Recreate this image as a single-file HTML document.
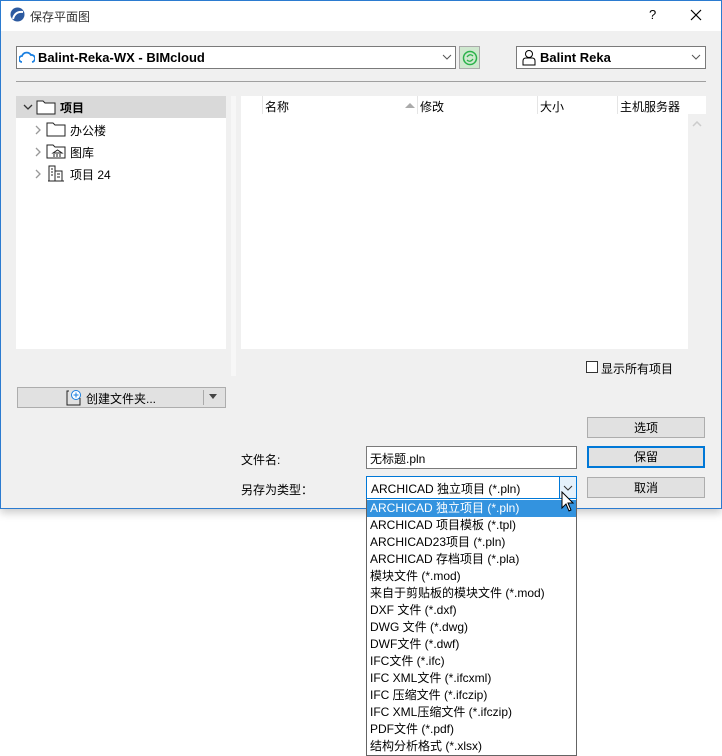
<!DOCTYPE html>
<html><head><meta charset="utf-8"><style>
*{margin:0;padding:0;box-sizing:border-box}
body{width:722px;height:756px;background:#fff;font-family:"Liberation Sans","Noto Sans CJK SC",sans-serif;font-size:12px;color:#000;position:relative;overflow:hidden}
.a{position:absolute}
.win{left:0;top:0;width:722px;height:509px;background:#f0f0f0;box-shadow:0 4px 8px rgba(0,0,0,.2)}
.bd{left:0;top:0;width:722px;height:509px;border:1px solid #2b7bd0;pointer-events:none}
.tb{left:0;top:0;width:722px;height:31px;background:#fff}
.combo{background:#fff;border:1px solid #7a7a7a}
.btn{background:#e1e1e1;border:1px solid #adadad;text-align:center;line-height:20px}
.it{position:absolute;left:3px;height:17px;line-height:17px;white-space:nowrap}
</style></head><body>
<div class="a win">
<div class="a tb"></div>
<svg class="a" style="left:10px;top:7px" width="15" height="15"><circle cx="7.5" cy="7.5" r="7" fill="#2c5aa0"/><path d="M3 12 Q5 4 13 5" stroke="#fff" stroke-width="2" fill="none"/></svg>
<div class="a" style="left:30px;top:8px;color:#333">保存平面图</div>
<div class="a" style="left:649px;top:7px;font-size:13px">?</div>
<svg class="a" style="left:690px;top:9px" width="12" height="12"><path d="M1 1L11 11M11 1L1 11" stroke="#000" stroke-width="1.2"/></svg>

<div class="a combo" style="left:16px;top:46px;width:440px;height:23px"></div>
<svg class="a" style="left:19px;top:51px" width="16" height="12"><path d="M3 11 A3 3 0 0 1 3 5 A5 5 0 0 1 12 4 A3.5 3.5 0 0 1 13 11" stroke="#1a7fe0" stroke-width="1.8" fill="none"/></svg>
<div class="a" style="left:38px;top:50px;font-weight:bold;font-size:13px">Balint-Reka-WX - BIMcloud</div>
<svg class="a" style="left:442px;top:54px" width="10" height="6"><path d="M1 1L5 5L9 1" stroke="#555" fill="none"/></svg>
<div class="a" style="left:459px;top:46px;width:21px;height:23px;background:#cfe8cf;border:1px solid #aaa"></div>
<svg class="a" style="left:462px;top:50px" width="16" height="16"><circle cx="8" cy="8" r="6.5" stroke="#2ab24a" stroke-width="1.5" fill="none"/><path d="M5 7 Q8 3 11 6M11 9 Q8 13 5 10" stroke="#2ab24a" stroke-width="1.3" fill="none"/></svg>
<div class="a combo" style="left:516px;top:46px;width:190px;height:23px"></div>
<svg class="a" style="left:522px;top:49px" width="14" height="17"><circle cx="7" cy="5" r="3.5" stroke="#000" fill="none"/><path d="M1 16V12Q1 9 4 9H10Q13 9 13 12V16Z" stroke="#000" fill="none"/></svg>
<div class="a" style="left:540px;top:50px;font-weight:bold;font-size:13px">Balint Reka</div>
<svg class="a" style="left:691px;top:54px" width="10" height="6"><path d="M1 1L5 5L9 1" stroke="#555" fill="none"/></svg>
<div class="a" style="left:16px;top:81px;width:690px;height:1px;background:#a0a0a0"></div>

<div class="a" style="left:16px;top:96px;width:210px;height:253px;background:#fff"></div>
<div class="a" style="left:16px;top:96px;width:210px;height:22px;background:#d9d9d9"></div>
<svg class="a" style="left:23px;top:104px" width="10" height="6"><path d="M1 1L5 5L9 1" stroke="#333" stroke-width="1.3" fill="none"/></svg>
<svg class="a" style="left:36px;top:98px" width="20" height="17"><path d="M1 3H7L9 5H19V16H1Z" stroke="#222" fill="#fff"/></svg>
<div class="a" style="left:60px;top:99px;font-weight:bold">项目</div>
<svg class="a" style="left:35px;top:125px" width="6" height="10"><path d="M1 1L5 5L1 9" stroke="#999" stroke-width="1.3" fill="none"/></svg>
<svg class="a" style="left:46px;top:120px" width="20" height="17"><path d="M1 3H7L9 5H19V16H1Z" stroke="#222" fill="#fff"/></svg>
<div class="a" style="left:70px;top:122px">办公楼</div>
<svg class="a" style="left:35px;top:147px" width="6" height="10"><path d="M1 1L5 5L1 9" stroke="#999" stroke-width="1.3" fill="none"/></svg>
<svg class="a" style="left:46px;top:142px" width="20" height="18"><path d="M1 3H7L9 5H19V16H1Z" stroke="#222" fill="#fff"/><path d="M7 11L11.5 8L16 11ZM8 12V15M11 12V15M14 12V15M6 16H17" stroke="#222" fill="none"/></svg>
<div class="a" style="left:70px;top:144px">图库</div>
<svg class="a" style="left:35px;top:169px" width="6" height="10"><path d="M1 1L5 5L1 9" stroke="#999" stroke-width="1.3" fill="none"/></svg>
<svg class="a" style="left:47px;top:164px" width="18" height="18"><path d="M2 17V2H8V17M8 7H15V17M1 17H17M4 5H6M4 8H6M4 11H6M10 10H13M10 13H13" stroke="#222" fill="none"/></svg>
<div class="a" style="left:70px;top:166px">项目 24</div>

<div class="a" style="left:231px;top:96px;width:5px;height:280px;background:#f7f7f7"></div>
<div class="a" style="left:241px;top:96px;width:465px;height:253px;background:#fff"></div>
<div class="a" style="left:688px;top:114px;width:18px;height:235px;background:#f0f0f0"></div>
<svg class="a" style="left:692px;top:121px" width="10" height="6"><path d="M1 5L5 1L9 5" stroke="#ccc" stroke-width="1.5" fill="none"/></svg>
<div class="a" style="left:262px;top:96px;width:1px;height:18px;background:#e5e5e5"></div>
<div class="a" style="left:265px;top:98px">名称</div>
<svg class="a" style="left:405px;top:102px" width="10" height="6"><path d="M0 6L5 1L10 6Z" fill="#aaa"/></svg>
<div class="a" style="left:417px;top:96px;width:1px;height:18px;background:#e5e5e5"></div>
<div class="a" style="left:420px;top:98px">修改</div>
<div class="a" style="left:537px;top:96px;width:1px;height:18px;background:#e5e5e5"></div>
<div class="a" style="left:540px;top:98px">大小</div>
<div class="a" style="left:617px;top:96px;width:1px;height:18px;background:#e5e5e5"></div>
<div class="a" style="left:620px;top:98px">主机服务器</div>

<div class="a" style="left:586px;top:361px;width:12px;height:12px;border:1px solid #333;background:#fff"></div>
<div class="a" style="left:601px;top:360px">显示所有项目</div>

<div class="a btn" style="left:17px;top:387px;width:209px;height:21px"></div>
<div class="a" style="left:203px;top:390px;width:1px;height:15px;background:#aaa"></div>
<svg class="a" style="left:209px;top:394px" width="8" height="5"><path d="M0 0H8L4 5Z" fill="#444"/></svg>
<svg class="a" style="left:65px;top:389px" width="18" height="18"><path d="M4 2H2V16H15V9" stroke="#222" fill="none"/><circle cx="11" cy="6" r="4.5" stroke="#1a7fe0" fill="#fff"/><path d="M11 3.5V8.5M8.5 6H13.5" stroke="#1a7fe0"/></svg>
<div class="a" style="left:86px;top:390px">创建文件夹...</div>

<div class="a btn" style="left:587px;top:417px;width:118px;height:21px">选项</div>
<div class="a" style="left:241px;top:451px">文件名:</div>
<div class="a" style="left:366px;top:446px;width:211px;height:23px;background:#fff;border:1px solid #7a7a7a;padding:3px 0 0 3px">无标题.pln</div>
<div class="a btn" style="left:587px;top:446px;width:118px;height:22px;border:2px solid #0078d7;line-height:18px">保留</div>
<div class="a" style="left:241px;top:481px">另存为类型：</div>
<div class="a" style="left:366px;top:476px;width:211px;height:23px;background:#fff;border:1px solid #0078d7;padding:3px 0 0 4px">ARCHICAD 独立项目 (*.pln)</div>
<div class="a" style="left:559px;top:477px;width:17px;height:21px;background:#e5f1fb;border-left:1px solid #0078d7"></div>
<svg class="a" style="left:563px;top:485px" width="10" height="6"><path d="M1 1L5 5L9 1" stroke="#333" fill="none"/></svg>
<div class="a btn" style="left:587px;top:477px;width:118px;height:21px">取消</div>
<div class="a bd"></div>
</div>

<div class="a" style="left:366px;top:499px;width:211px;height:257px;background:#fff;border:1px solid #646464;border-top:none">
<div class="a" style="left:0;top:1px;width:209px;height:17px;background:#3393df"></div>
<div class="it" style="top:1px;color:#fff">ARCHICAD 独立项目 (*.pln)</div>
<div class="it" style="top:18px">ARCHICAD 项目模板 (*.tpl)</div>
<div class="it" style="top:35px">ARCHICAD23项目 (*.pln)</div>
<div class="it" style="top:52px">ARCHICAD 存档项目 (*.pla)</div>
<div class="it" style="top:69px">模块文件 (*.mod)</div>
<div class="it" style="top:86px">来自于剪贴板的模块文件 (*.mod)</div>
<div class="it" style="top:103px">DXF 文件 (*.dxf)</div>
<div class="it" style="top:120px">DWG 文件 (*.dwg)</div>
<div class="it" style="top:137px">DWF文件 (*.dwf)</div>
<div class="it" style="top:154px">IFC文件 (*.ifc)</div>
<div class="it" style="top:171px">IFC XML文件 (*.ifcxml)</div>
<div class="it" style="top:188px">IFC 压缩文件 (*.ifczip)</div>
<div class="it" style="top:205px">IFC XML压缩文件 (*.ifczip)</div>
<div class="it" style="top:222px">PDF文件 (*.pdf)</div>
<div class="it" style="top:239px">结构分析格式 (*.xlsx)</div>
</div>
<svg class="a" style="left:561px;top:491px" width="14" height="22"><path d="M1 1V17L5 13L8 20L10 19L7 12H12Z" fill="#fff" stroke="#000"/></svg>
</body></html>
